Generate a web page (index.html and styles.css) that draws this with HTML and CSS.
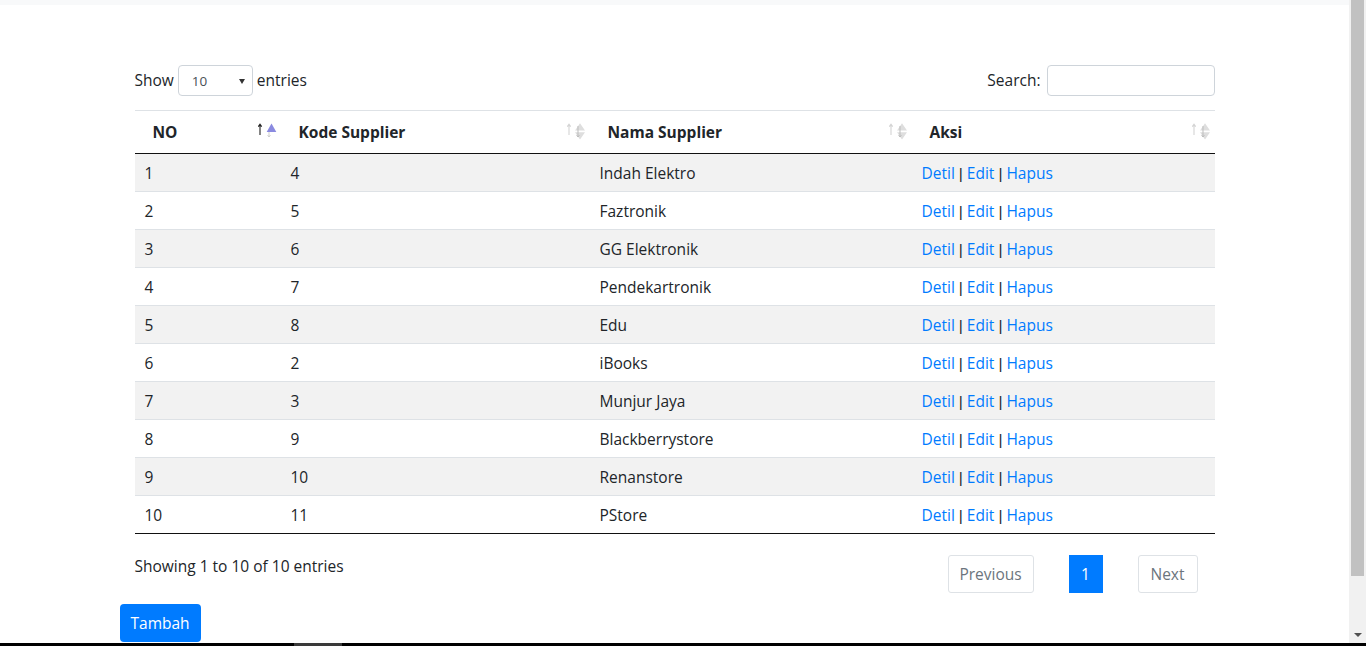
FILE: index.html
```html
<!DOCTYPE html>
<html lang="id">
<head>
<meta charset="utf-8">
<title>Data Supplier</title>
<link rel="stylesheet" href="styles.css">
</head>
<body>
<div class="screen">
  <div class="viewport">
    <div class="topbar"></div>
    <div class="container">
      <div class="wrap">
        <div class="controls">
          <label class="length">Show <span class="select"><span class="val">10</span><span class="caret"></span></span> entries</label>
          <label class="search">Search: <input type="search" class="search-input"></label>
        </div>
        <table class="data">
          <colgroup><col class="w1"><col class="w2"><col class="w3"><col class="w4"></colgroup>
          <thead>
            <tr>
              <th>NO<svg class="sort" width="19" height="18" viewBox="0 0 19 18"><path d="M2 13V2.5M0.3 4.6L2 2.3L3.7 4.6" stroke="#222" stroke-width="1.1" fill="none"/><path d="M11 9V15M9.6 13.2L11 15L12.4 13.2" stroke="#cfcfcf" stroke-width="1" fill="none"/><path d="M8.7 10L13.5 1.6L18.3 10Z" fill="#8a8ae0"/></svg></th>
              <th>Kode Supplier<svg class="sort" width="19" height="18" viewBox="0 0 19 18"><path d="M2 13V2.5M0.3 4.6L2 2.3L3.7 4.6" stroke="#d4d4d4" stroke-width="1.1" fill="none"/><path d="M8 8.6L13 1.2L18 8.6Z M8 10.2L13 17.4L18 10.2Z" fill="#dedede"/><path d="M11 4V15M9.6 13.2L11 15L12.4 13.2" stroke="#bdbdbd" stroke-width="1" fill="none"/></svg></th>
              <th>Nama Supplier<svg class="sort" width="19" height="18" viewBox="0 0 19 18"><path d="M2 13V2.5M0.3 4.6L2 2.3L3.7 4.6" stroke="#d4d4d4" stroke-width="1.1" fill="none"/><path d="M8 8.6L13 1.2L18 8.6Z M8 10.2L13 17.4L18 10.2Z" fill="#dedede"/><path d="M11 4V15M9.6 13.2L11 15L12.4 13.2" stroke="#bdbdbd" stroke-width="1" fill="none"/></svg></th>
              <th>Aksi<svg class="sort" width="19" height="18" viewBox="0 0 19 18"><path d="M2 13V2.5M0.3 4.6L2 2.3L3.7 4.6" stroke="#d4d4d4" stroke-width="1.1" fill="none"/><path d="M8 8.6L13 1.2L18 8.6Z M8 10.2L13 17.4L18 10.2Z" fill="#dedede"/><path d="M11 4V15M9.6 13.2L11 15L12.4 13.2" stroke="#bdbdbd" stroke-width="1" fill="none"/></svg></th>
            </tr>
          </thead>
          <tbody>
            <tr><td>1</td><td>4</td><td>Indah Elektro</td><td><a href="#">Detil</a><span class="sep">|</span><a href="#">Edit</a><span class="sep">|</span><a href="#">Hapus</a></td></tr>
            <tr><td>2</td><td>5</td><td>Faztronik</td><td><a href="#">Detil</a><span class="sep">|</span><a href="#">Edit</a><span class="sep">|</span><a href="#">Hapus</a></td></tr>
            <tr><td>3</td><td>6</td><td>GG Elektronik</td><td><a href="#">Detil</a><span class="sep">|</span><a href="#">Edit</a><span class="sep">|</span><a href="#">Hapus</a></td></tr>
            <tr><td>4</td><td>7</td><td>Pendekartronik</td><td><a href="#">Detil</a><span class="sep">|</span><a href="#">Edit</a><span class="sep">|</span><a href="#">Hapus</a></td></tr>
            <tr><td>5</td><td>8</td><td>Edu</td><td><a href="#">Detil</a><span class="sep">|</span><a href="#">Edit</a><span class="sep">|</span><a href="#">Hapus</a></td></tr>
            <tr><td>6</td><td>2</td><td>iBooks</td><td><a href="#">Detil</a><span class="sep">|</span><a href="#">Edit</a><span class="sep">|</span><a href="#">Hapus</a></td></tr>
            <tr><td>7</td><td>3</td><td>Munjur Jaya</td><td><a href="#">Detil</a><span class="sep">|</span><a href="#">Edit</a><span class="sep">|</span><a href="#">Hapus</a></td></tr>
            <tr><td>8</td><td>9</td><td>Blackberrystore</td><td><a href="#">Detil</a><span class="sep">|</span><a href="#">Edit</a><span class="sep">|</span><a href="#">Hapus</a></td></tr>
            <tr><td>9</td><td>10</td><td>Renanstore</td><td><a href="#">Detil</a><span class="sep">|</span><a href="#">Edit</a><span class="sep">|</span><a href="#">Hapus</a></td></tr>
            <tr><td>10</td><td>11</td><td>PStore</td><td><a href="#">Detil</a><span class="sep">|</span><a href="#">Edit</a><span class="sep">|</span><a href="#">Hapus</a></td></tr>
          </tbody>
        </table>
        <div class="footer">
          <div class="info">Showing 1 to 10 of 10 entries</div>
          <div class="pager">
            <a class="pg prev" href="#">Previous</a>
            <a class="pg current" href="#">1</a>
            <a class="pg next" href="#">Next</a>
          </div>
        </div>
      </div>
      <a class="btn" href="#">Tambah</a>
    </div>
  </div>
  <div class="scrollbar"><div class="thumb"></div><div class="track"></div><div class="arrow"></div></div>
</div>
<div class="taskbar"><span class="seg"></span></div>
</body>
</html>
```

FILE: styles.css
```css
* { box-sizing: border-box; }
html, body { margin: 0; height: 100%; }
body {
  height: 646px;
  overflow: hidden;
  display: flex;
  flex-direction: column;
  font-family: "Open Sans", "Noto Sans", sans-serif;
  font-size: 15.5px;
  line-height: 21px;
  color: #212529;
  background: #fff;
}
.screen { flex: 1; display: flex; min-height: 0; }
.viewport { flex: 1; min-width: 0; overflow: hidden; }
.topbar { height: 5px; background: #f8f9fa; }
.container { width: 1140px; margin: 0 auto; padding: 60px 15px 0; }
.wrap { padding: 0 15px; }

.controls { display: flex; justify-content: space-between; align-items: center; height: 31px; }
.length, .search { display: flex; align-items: center; font-weight: 400; }
.select {
  display: flex; align-items: center; justify-content: space-between;
  width: 75px; height: 31px; margin: 0 4px 0 4px;
  padding: 1px 7px 0 13px;
  border: 1px solid #ced4da; border-radius: 4px;
  font-size: 13.5px; color: #495057;
}
.caret { width: 0; height: 0; border-left: 3px solid transparent; border-right: 3px solid transparent; border-top: 5px solid #333; }
.search-input {
  width: 168px; height: 31px; margin-left: 6px;
  border: 1px solid #ced4da; border-radius: 4px; outline: none;
  font: inherit;
}

.data { width: 100%; border-collapse: collapse; table-layout: fixed; margin-top: 14px; }
.w1 { width: 146px; } .w2 { width: 309px; } .w3 { width: 322px; } .w4 { width: 303px; }
.data th {
  position: relative;
  text-align: left; font-weight: 700;
  padding: 11px 18px 10px;
  border-top: 1px solid #dee2e6;
  border-bottom: 1px solid #111;
}
.sort { position: absolute; right: 4px; top: 11px; }
.data td { padding: 9px 10px 7px; border-top: 1px solid #dee2e6; }
.data tbody tr:nth-child(odd) { background: #f2f2f2; }
.data tbody tr:last-child td { border-bottom: 1px solid #111; }
.data a { color: #007bff; text-decoration: none; }
.sep { font-family: "Liberation Sans", sans-serif; margin: 0 4px; }

.footer { display: flex; justify-content: space-between; align-items: flex-start; margin-top: 21px; }
.info { padding-top: 1px; }
.pager { display: flex; gap: 35px; margin-right: 17px; }
.pg {
  display: block; height: 38px; line-height: 36px; text-align: center;
  border: 1px solid #dee2e6; border-radius: 3px;
  color: #6c757d; text-decoration: none;
}
.prev { width: 86px; }
.next { width: 60px; }
.current { width: 34px; background: #007bff; border-color: #007bff; color: #fff; border-radius: 0; }

.btn {
  display: inline-block; margin-top: 11px;
  padding: 9px 11px 8px; line-height: 21px;
  background: #007bff; color: #fff; text-decoration: none;
  border-radius: 4px;
}

.scrollbar { width: 17px; background: #f1f1f1; display: flex; flex-direction: column; padding: 0 2px; }
.thumb { height: 576px; background: #c1c1c1; }
.track { flex: 1; }
.arrow {
  align-self: center; margin-bottom: 6px;
  width: 0; height: 0;
  border-left: 4px solid transparent; border-right: 4px solid transparent;
  border-top: 4px solid #505050;
}
.taskbar { height: 3px; background: #000; display: flex; }
.seg { width: 48px; margin-left: 294px; background: #3a3a3a; }
```
